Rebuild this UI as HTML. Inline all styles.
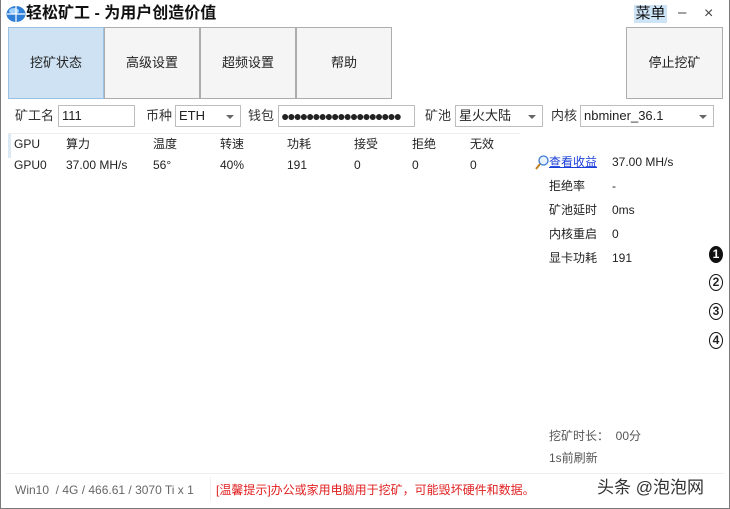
<!DOCTYPE html>
<html><head><meta charset="utf-8"><style>
*{margin:0;padding:0;box-sizing:border-box}
body{width:730px;height:509px;background:#fff;font-family:"Liberation Sans","Noto Sans CJK SC",sans-serif;font-size:12px;color:#222;position:relative;overflow:hidden}
.win{position:absolute;left:0;top:0;width:730px;height:509px;border:1px solid #7a7a7a;border-top:none}
.a{position:absolute;white-space:nowrap;line-height:14px}
.btn{position:absolute;top:27px;height:72px;border:1px solid #adadad;background:#f5f5f5;display:flex;align-items:center;justify-content:center;font-size:13px;color:#222;line-height:16px}
.inp{position:absolute;top:105px;height:22px;border:1px solid #bdbdbd;background:#fff;font-size:13px;padding:0 3px;line-height:20px}
.lab{position:absolute;top:108px;font-size:13px;color:#333;line-height:16px}
.arr{position:absolute;right:6px;top:9px;width:0;height:0;border-left:4px solid transparent;border-right:4px solid transparent;border-top:4px solid #666}
.circ{position:absolute;left:709px;width:14px;height:17px;border:1.5px solid #111;border-radius:50%;font-size:12px;font-weight:bold;text-align:center;line-height:14px}
</style></head><body>
<div class="win"></div>
<svg class="a" style="left:6px;top:5px" width="20" height="18" viewBox="0 0 20 18"><ellipse cx="10" cy="9" rx="9.5" ry="8" fill="#2f7fd8"/><ellipse cx="8" cy="6" rx="5" ry="3" fill="#9fd0ff"/><path d="M10 1v16M1 9h18" stroke="#fff" stroke-width="1.2"/></svg>
<div class="a" style="left:26px;top:5px;font-size:16px;line-height:18px;font-weight:bold;color:#111">轻松矿工 - 为用户创造价值</div>
<div class="a" style="left:634px;top:5px;width:33px;height:18px;background:#cde4f7;font-size:15px;line-height:18px;text-align:center;color:#111">菜单</div>
<div class="a" style="left:678px;top:6px;font-size:15px;color:#444">–</div>
<div class="a" style="left:704px;top:7px;font-size:16px;color:#444">×</div>
<div class="btn" style="left:8px;width:96px;background:#cfe2f3;border-color:#99c1e4">挖矿状态</div>
<div class="btn" style="left:104px;width:96px">高级设置</div>
<div class="btn" style="left:200px;width:96px">超频设置</div>
<div class="btn" style="left:296px;width:96px">帮助</div>
<div class="btn" style="left:626px;width:97px">停止挖矿</div>
<div class="lab" style="left:15px">矿工名</div><div class="inp" style="left:58px;width:77px">111</div>
<div class="lab" style="left:146px">币种</div><div class="inp" style="left:175px;width:66px">ETH<span class="arr"></span></div>
<div class="lab" style="left:248px">钱包</div><div class="inp" style="left:278px;width:137px;font-size:14px;letter-spacing:-2.2px;overflow:hidden;padding-left:2px">●●●●●●●●●●●●●●●●●●●</div>
<div class="lab" style="left:425px">矿池</div><div class="inp" style="left:455px;width:88px">星火大陆<span class="arr"></span></div>
<div class="lab" style="left:551px">内核</div><div class="inp" style="left:580px;width:134px">nbminer_36.1<span class="arr"></span></div>
<div class="a" style="left:8px;top:133px;width:512px;height:1px;background:#eee"></div>
<div class="a" style="left:8px;top:134px;width:3px;height:24px;background:#dce8f4"></div>
<div class="a" style="top:137px;left:14px">GPU</div><div class="a" style="top:137px;left:66px">算力</div><div class="a" style="top:137px;left:153px">温度</div><div class="a" style="top:137px;left:220px">转速</div><div class="a" style="top:137px;left:287px">功耗</div><div class="a" style="top:137px;left:354px">接受</div><div class="a" style="top:137px;left:412px">拒绝</div><div class="a" style="top:137px;left:470px">无效</div>
<div class="a" style="top:158px;left:14px">GPU0</div><div class="a" style="top:158px;left:66px">37.00 MH/s</div><div class="a" style="top:158px;left:153px">56°</div><div class="a" style="top:158px;left:220px">40%</div><div class="a" style="top:158px;left:287px">191</div><div class="a" style="top:158px;left:354px">0</div><div class="a" style="top:158px;left:412px">0</div><div class="a" style="top:158px;left:470px">0</div>
<svg class="a" style="left:535px;top:155px" width="14" height="15" viewBox="0 0 14 15"><circle cx="8.5" cy="5.5" r="4.5" fill="#e8f3ff" stroke="#3a7bd5" stroke-width="1.3"/><path d="M5 9L1 14" stroke="#c08020" stroke-width="2"/></svg>
<div class="a" style="left:549px;top:155px;color:#1a3fd8;text-decoration:underline">查看收益</div><div class="a" style="left:612px;top:155px">37.00 MH/s</div>
<div class="a" style="left:549px;top:179px">拒绝率</div><div class="a" style="left:612px;top:179px">-</div>
<div class="a" style="left:549px;top:203px">矿池延时</div><div class="a" style="left:612px;top:203px">0ms</div>
<div class="a" style="left:549px;top:227px">内核重启</div><div class="a" style="left:612px;top:227px">0</div>
<div class="a" style="left:549px;top:251px">显卡功耗</div><div class="a" style="left:612px;top:251px">191</div>
<div class="circ" style="top:246px;background:#111;color:#fff">1</div>
<div class="circ" style="top:274px">2</div>
<div class="circ" style="top:303px">3</div>
<div class="circ" style="top:332px">4</div>
<div class="a" style="left:549px;top:429px;color:#555">挖矿时长：&nbsp;&nbsp;00分</div>
<div class="a" style="left:549px;top:451px;color:#555">1s前刷新</div>
<div class="a" style="left:6px;top:473px;width:718px;height:1px;background:#eee"></div>
<div class="a" style="left:15px;top:483px;color:#666">Win10 &nbsp;/ 4G / 466.61 / 3070 Ti x 1</div>
<div class="a" style="left:210px;top:477px;width:1px;height:24px;background:#eee"></div>
<div class="a" style="left:216px;top:483px;color:#e02020">[温馨提示]办公或家用电脑用于挖矿，可能毁坏硬件和数据。</div>
<div class="a" style="left:597px;top:478px;font-size:17px;line-height:20px;color:#333">头条 @泡泡网</div>
</body></html>
